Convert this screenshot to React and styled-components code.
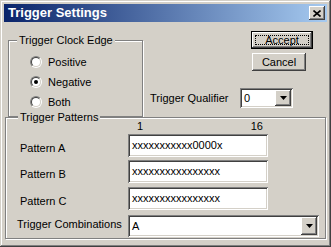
import { Fragment } from "react";
import { styled, css, createGlobalStyle } from "styled-components";

const GlobalStyle = createGlobalStyle`
  * {
    box-sizing: border-box;
  }
  body {
    margin: 0;
    background: #d4d0c8;
    font-family: "Liberation Sans", Arial, sans-serif;
    font-size: 11px;
    color: #000;
  }
`;

const raised = css`
  background: #d4d0c8;
  box-shadow: inset -1px -1px #404040, inset 1px 1px #fff,
    inset -2px -2px #808080, inset 2px 2px #d4d0c8;
`;

const sunken = css`
  background: #fff;
  box-shadow: inset 1px 1px #808080, inset -1px -1px #fff,
    inset 2px 2px #404040, inset -2px -2px #d4d0c8;
`;

const Window = styled.div`
  width: 331px;
  height: 247px;
  padding: 4px;
  display: flex;
  flex-direction: column;
  background: #d4d0c8;
  box-shadow: inset -1px -1px #404040, inset 1px 1px #d4d0c8,
    inset -2px -2px #808080, inset 2px 2px #fff;
`;

const TitleBar = styled.div`
  height: 18px;
  display: flex;
  align-items: center;
  justify-content: space-between;
  padding: 0 2px 0 4px;
  background: linear-gradient(90deg, #0a246a, #a6caf0);
`;

const Title = styled.span`
  color: #fff;
  font-weight: bold;
  font-size: 13px;
  line-height: 18px;
`;

const CloseButton = styled.div`
  ${raised};
  width: 16px;
  height: 14px;
  display: flex;
  align-items: center;
  justify-content: center;
`;

const Body = styled.div`
  flex: 1;
  display: flex;
  flex-direction: column;
`;

const TopRow = styled.div`
  display: flex;
  align-items: flex-start;
  padding-top: 9px;
`;

const Group = styled.div`
  position: relative;
  border: 1px solid #808080;
  box-shadow: inset 1px 1px #fff, 1px 1px #fff;
  margin-left: ${(p) => p.$left}px;
  margin-top: ${(p) => p.$top}px;
  width: ${(p) => p.$width}px;
  height: ${(p) => p.$height}px;
`;

const Legend = styled.span`
  position: absolute;
  top: -7px;
  left: ${(p) => p.$left}px;
  padding: 0 2px;
  line-height: 13px;
  background: #d4d0c8;
`;

const RadioList = styled.div`
  display: flex;
  flex-direction: column;
  padding: 11px 0 0 21px;
`;

const RadioRow = styled.label`
  height: 20px;
  display: flex;
  align-items: center;
  gap: 6px;
`;

const RadioCircle = styled.span`
  position: relative;
  width: 12px;
  height: 12px;
  border-radius: 50%;
  border: 1px solid;
  border-color: #808080 #fff #fff #808080;

  &::before {
    content: "";
    position: absolute;
    inset: 0;
    border-radius: 50%;
    border: 1px solid;
    border-color: #404040 #d4d0c8 #d4d0c8 #404040;
    background: #fff;
  }

  ${(p) =>
    p.$checked &&
    css`
      &::after {
        content: "";
        position: absolute;
        left: 3px;
        top: 3px;
        width: 4px;
        height: 4px;
        border-radius: 50%;
        background: #000;
      }
    `}
`;

const RightColumn = styled.div`
  display: flex;
  flex-direction: column;
  align-items: flex-start;
  margin-left: 7px;
`;

const Button = styled.div`
  ${raised};
  position: relative;
  height: 18px;
  width: ${(p) => p.$width}px;
  margin-left: ${(p) => p.$left}px;
  margin-top: ${(p) => p.$top}px;
  display: flex;
  align-items: center;
  justify-content: center;
  line-height: 13px;

  ${(p) =>
    p.$default &&
    css`
      border: 1px solid #000;
      &::after {
        content: "";
        position: absolute;
        inset: 3px;
        border: 1px dotted #000;
      }
    `}
`;

const QualifierRow = styled.div`
  display: flex;
  align-items: center;
  margin-top: 17px;
`;

const FieldLabel = styled.span`
  width: ${(p) => p.$width}px;
  padding-left: ${(p) => p.$indent || 0}px;
  padding-top: ${(p) => p.$drop || 0}px;
  line-height: 13px;
  white-space: nowrap;
`;

const Combo = styled.div`
  ${sunken};
  width: ${(p) => p.$width}px;
  height: ${(p) => p.$height}px;
  display: flex;
  align-items: center;
  padding: 2px;
`;

const ComboValue = styled.span`
  flex: 1;
  padding-left: 2px;
  line-height: 13px;
`;

const ArrowButton = styled.div`
  ${raised};
  width: 16px;
  height: 100%;
  display: flex;
  align-items: center;
  justify-content: center;
`;

const PatternGrid = styled.div`
  display: grid;
  grid-template-columns: 122px auto;
  align-items: start;
  padding-top: 2px;
`;

const RulerRow = styled.div`
  grid-column: 2;
  width: 140px;
  height: 14px;
  display: flex;
  justify-content: space-between;
  padding: 0 5px 0 9px;
  line-height: 13px;
`;

const TextBox = styled.div`
  ${sunken};
  width: 140px;
  height: 23px;
  padding: 0 4px;
  display: flex;
  align-items: center;
  margin-top: ${(p) => p.$top || 0}px;
  line-height: 13px;
`;

const Cell = styled.div`
  margin-top: ${(p) => p.$top || 0}px;
`;

function DownArrow() {
  return (
    <svg width="7" height="4" viewBox="0 0 7 4">
      <path d="M0 0h7L3.5 4z" fill="#000" />
    </svg>
  );
}

function Radio({ label, checked }) {
  return (
    <RadioRow>
      <RadioCircle $checked={checked} />
      {label}
    </RadioRow>
  );
}

const patterns = [
  { name: "Pattern A", value: "xxxxxxxxxxx0000x", top: 0 },
  { name: "Pattern B", value: "xxxxxxxxxxxxxxxx", top: 3 },
  { name: "Pattern C", value: "xxxxxxxxxxxxxxxx", top: 4 },
];

export default function App() {
  return (
    <>
      <GlobalStyle />
      <Window>
        <TitleBar>
          <Title>Trigger Settings</Title>
          <CloseButton>
            <svg width="8" height="7" viewBox="0 0 8 7">
              <path d="M0.5 0.5l7 6M7.5 0.5l-7 6" stroke="#000" strokeWidth="1.6" />
            </svg>
          </CloseButton>
        </TitleBar>
        <Body>
          <TopRow>
            <Group $left={4} $top={9} $width={135} $height={77}>
              <Legend $left={8}>Trigger Clock Edge</Legend>
              <RadioList>
                <Radio label="Positive" />
                <Radio label="Negative" checked />
                <Radio label="Both" />
              </RadioList>
            </Group>
            <RightColumn>
              <Button $default $width={62} $left={101} $top={0}>
                Accept
              </Button>
              <Button $width={54} $left={102} $top={4}>
                Cancel
              </Button>
              <QualifierRow>
                <FieldLabel $width={90}>Trigger Qualifier</FieldLabel>
                <Combo $width={53} $height={20}>
                  <ComboValue>0</ComboValue>
                  <ArrowButton>
                    <DownArrow />
                  </ArrowButton>
                </Combo>
              </QualifierRow>
            </RightColumn>
          </TopRow>
          <Group $left={1} $top={0} $width={321} $height={122}>
            <Legend $left={12}>Trigger Patterns</Legend>
            <PatternGrid>
              <RulerRow>
                <span>1</span>
                <span>16</span>
              </RulerRow>
              {patterns.map((p) => (
                <Fragment key={p.name}>
                  <FieldLabel $indent={14} $drop={p.top + 8}>
                    {p.name}
                  </FieldLabel>
                  <TextBox $top={p.top}>{p.value}</TextBox>
                </Fragment>
              ))}
              <FieldLabel $indent={11} $drop={8}>
                Trigger Combinations
              </FieldLabel>
              <Cell $top={5}>
                <Combo $width={191} $height={22}>
                  <ComboValue>A</ComboValue>
                  <ArrowButton>
                    <DownArrow />
                  </ArrowButton>
                </Combo>
              </Cell>
            </PatternGrid>
          </Group>
        </Body>
      </Window>
    </>
  );
}
